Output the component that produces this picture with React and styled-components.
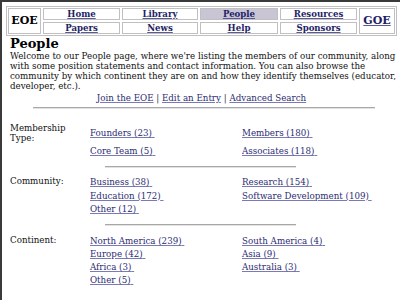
import React from "react";
import styled, { createGlobalStyle } from "styled-components";

const GlobalStyle = createGlobalStyle`
  html, body { margin: 0; padding: 0; background: #fff; }
  body { font-family: "DejaVu Serif", serif; color: #111; }
`;

const Frame = styled.div`
  box-sizing: border-box;
  width: 400px;
  height: 300px;
  overflow: hidden;
  border-top: 2px solid #3a3a3a;
  border-left: 2px solid #3a3a3a;
  padding: 4px 3px 0 4px;
  background: #fff;
`;

const NavTable = styled.div`
  display: grid;
  grid-template-columns: 33px 77px 76px 78px 77px 36px;
  grid-template-rows: 12px 12px;
  gap: 2px;
  padding: 1px;
  border: 1px solid #c0c0c0;
  width: max-content;
`;

const Cell = styled.div`
  box-sizing: border-box;
  border: 1px solid #c0c0c0;
  background: ${(p) => (p.$active ? "#c9c5d5" : "#fff")};
  display: flex;
  align-items: center;
  justify-content: center;
  font-size: 8.6px;
  font-weight: bold;
  line-height: 10px;
  white-space: nowrap;
`;

const BrandCell = styled(Cell)`
  grid-row: 1 / span 2;
  grid-column: ${(p) => p.$col};
  font-size: 11px;
  color: #000;
`;

const NavLink = styled.a`
  color: #1e1e66;
  text-decoration: underline;
  text-decoration-color: #5a5a98;
`;

const Heading = styled.h1`
  margin: 1px 0 0 4px;
  font-size: 13px;
  line-height: 14px;
  font-weight: bold;
  color: #000;
`;

const Intro = styled.p`
  margin: 0 0 0 4px;
  font-size: 8.7px;
  line-height: 10px;
  white-space: nowrap;
`;

const Utility = styled.div`
  margin-top: 2px;
  text-align: center;
  font-size: 8.7px;
  line-height: 10px;
  color: #333;
`;

const TextLink = styled.a`
  color: #2b2b72;
  text-decoration: underline;
  text-decoration-color: #7a7ab8;
  white-space: nowrap;
`;

const Rule = styled.div`
  box-sizing: border-box;
  height: 2px;
  width: ${(p) => p.$width}px;
  margin: ${(p) => p.$top}px 0 0 ${(p) => p.$left}px;
  border-top: 1px solid #a8a8a8;
  border-bottom: 1px solid #e2e2e2;
`;

const Section = styled.div`
  display: grid;
  grid-template-columns: 80px 152px auto;
  margin: ${(p) => p.$top}px 0 0 4px;
  font-size: 8.7px;
  line-height: 10px;
`;

const Label = styled.div`
  color: #111;
`;

const Column = styled.div`
  display: flex;
  flex-direction: column;
  align-items: flex-start;
  gap: ${(p) => p.$gap}px;
  padding-top: ${(p) => p.$offset}px;
`;

const sections = [
  {
    label: ["Membership", "Type:"],
    top: 14,
    gap: 8,
    offset: 5,
    left: ["Founders (23)", "Core Team (5)"],
    right: ["Members (180)", "Associates (118)"],
  },
  {
    label: ["Community:"],
    top: 8,
    gap: 3.5,
    offset: 1,
    left: ["Business (38)", "Education (172)", "Other (12)"],
    right: ["Research (154)", "Software Development (109)"],
  },
  {
    label: ["Continent:"],
    top: 9,
    gap: 3,
    offset: 1,
    left: ["North America (239)", "Europe (42)", "Africa (3)", "Other (5)"],
    right: ["South America (4)", "Asia (9)", "Australia (3)"],
  },
];

const top = ["Home", "Library", "People", "Resources"];
const bottom = ["Papers", "News", "Help", "Sponsors"];

export default function App() {
  return (
    <>
      <GlobalStyle />
      <Frame>
        <NavTable>
          <BrandCell $col={1}>EOE</BrandCell>
          {top.map((t) => (
            <Cell key={t} $active={t === "People"}>
              <NavLink href="#">{t}</NavLink>
            </Cell>
          ))}
          <BrandCell $col={6}>
            <NavLink href="#">GOE</NavLink>
          </BrandCell>
          {bottom.map((t) => (
            <Cell key={t}>
              <NavLink href="#">{t}</NavLink>
            </Cell>
          ))}
        </NavTable>
        <Heading>People</Heading>
        <Intro>
          Welcome to our People page, where we're listing the members of our community, along
          <br />
          with some position statements and contact information. You can also browse the
          <br />
          community by which continent they are on and how they identify themselves (educator,
          <br />
          developer, etc.).
        </Intro>
        <Utility>
          <TextLink href="#">Join the EOE</TextLink> | <TextLink href="#">Edit an Entry</TextLink> |{" "}
          <TextLink href="#">Advanced Search</TextLink>
        </Utility>
        <Rule $width={342} $top={4} $left={27} />
        {sections.map((s, i) => (
          <React.Fragment key={s.label[0]}>
            {i > 0 && <Rule $width={191} $top={10} $left={99} />}
            <Section $top={s.top}>
              <Label>
                {s.label.map((l, j) => (
                  <div key={j}>{l}</div>
                ))}
              </Label>
              <Column $gap={s.gap} $offset={s.offset}>
                {s.left.map((l) => (
                  <TextLink key={l} href="#">
                    {l}{"\u00a0"}
                  </TextLink>
                ))}
              </Column>
              <Column $gap={s.gap} $offset={s.offset}>
                {s.right.map((l) => (
                  <TextLink key={l} href="#">
                    {l}{"\u00a0"}
                  </TextLink>
                ))}
              </Column>
            </Section>
          </React.Fragment>
        ))}
      </Frame>
    </>
  );
}
